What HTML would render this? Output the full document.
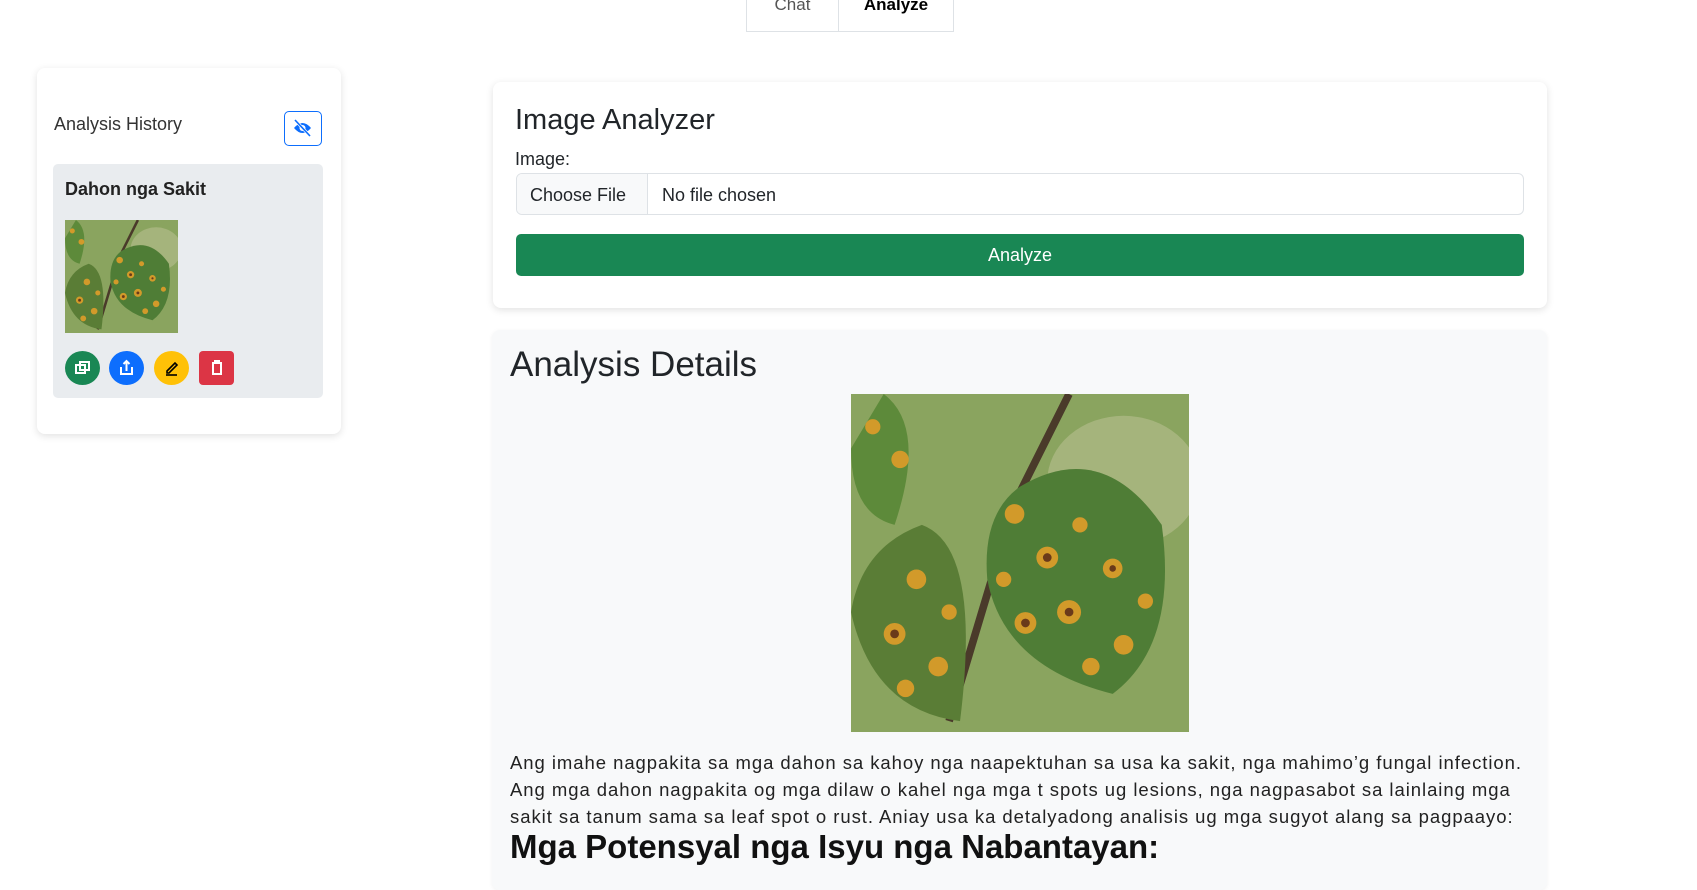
<!DOCTYPE html>
<html><head><meta charset="utf-8"><style>
*{box-sizing:border-box;margin:0;padding:0}
body{width:1697px;height:875px;overflow:hidden;background:#fff;font-family:"Liberation Sans",sans-serif;color:#212529;position:relative}
.abs{position:absolute}
.tab{position:absolute;top:-10px;height:42px;border:1px solid #dee2e6;border-top:none;font-size:17px;text-align:center;line-height:30px}
.card{position:absolute;background:#fff;border-radius:8px;box-shadow:0 2px 8px rgba(0,0,0,.12)}
.btn{position:absolute;width:35px;height:34px;border-radius:50%;top:351px}
</style></head><body>
<div class="tab" style="left:746px;width:92px;color:#555;border-right:none">Chat</div>
<div class="tab" style="left:838px;width:116px;font-weight:bold;color:#000">Analyze</div>

<div class="card" style="left:37px;top:68px;width:304px;height:366px"></div>
<div class="abs" style="left:54px;top:114px;font-size:18px;color:#333">Analysis History</div>
<div class="abs" style="left:284px;top:111px;width:38px;height:35px;border:1.5px solid #0d6efd;border-radius:5px">
<svg width="35" height="32" viewBox="0 0 35 32"><path d="M9 16 Q17.5 6 26 16 Q17.5 26 9 16Z" fill="#0d6efd"/><circle cx="17.5" cy="16" r="3" fill="#fff"/><line x1="10" y1="8" x2="25" y2="24" stroke="#fff" stroke-width="3"/><line x1="10" y1="8" x2="25" y2="24" stroke="#0d6efd" stroke-width="1.6"/></svg></div>
<div class="abs" style="left:53px;top:164px;width:270px;height:234px;background:#e9ecef;border-radius:5px"></div>
<div class="abs" style="left:65px;top:179px;font-size:18px;font-weight:bold;color:#222">Dahon nga Sakit</div>
<svg class="abs" style="left:65px;top:220px" width="113" height="113" viewBox="0 0 310 310" preserveAspectRatio="none"><use href="#leaf"/></svg>
<div class="btn" style="left:65px;background:#198754"><svg width="35" height="34"><rect x="11" y="14" width="9" height="8" fill="none" stroke="#fff" stroke-width="2"/><rect x="15" y="11" width="9" height="8" fill="none" stroke="#fff" stroke-width="2"/></svg></div>
<div class="btn" style="left:109px;background:#0d6efd"><svg width="35" height="34"><path d="M12 16v7h11v-7M17.5 20v-10M14.5 13l3-3 3 3" fill="none" stroke="#fff" stroke-width="2"/></svg></div>
<div class="btn" style="left:154px;background:#ffc107"><svg width="35" height="34"><path d="M13 20l8-8 2 2-8 8h-2z" fill="none" stroke="#000" stroke-width="1.6"/><line x1="12" y1="24" x2="23" y2="24" stroke="#000" stroke-width="1.6"/></svg></div>
<div class="btn" style="left:199px;background:#dc3545;border-radius:4px"><svg width="36" height="34"><path d="M13 12h10M16 12v-2h4v2M14 13v10h8v-10" fill="none" stroke="#fff" stroke-width="2"/></svg></div>

<div class="card" style="left:493px;top:82px;width:1054px;height:226px"></div>
<div class="abs" style="left:515px;top:104px;font-size:29px">Image Analyzer</div>
<div class="abs" style="left:515px;top:149px;font-size:18px">Image:</div>
<div class="abs" style="left:516px;top:173px;width:1008px;height:42px;border:1px solid #dee2e6;border-radius:6px;overflow:hidden;font-size:18px">
<div class="abs" style="left:0;top:0;width:131px;height:42px;background:#f8f9fa;border-right:1px solid #dee2e6;padding:11px 0 0 13px">Choose File</div>
<div class="abs" style="left:145px;top:11px">No file chosen</div></div>
<div class="abs" style="left:516px;top:234px;width:1008px;height:42px;background:#198754;border-radius:5px;color:#fff;font-size:18px;text-align:center;line-height:42px">Analyze</div>

<div class="abs" style="left:492px;top:330px;width:1055px;height:560px;background:#f8f9fa;border-radius:8px;box-shadow:0 1px 4px rgba(0,0,0,.06)"></div>
<div class="abs" style="left:510px;top:345px;font-size:35px">Analysis Details</div>
<svg class="abs" style="left:851px;top:394px" width="338" height="338" viewBox="0 0 310 310">
<defs><g id="leaf">
<rect width="310" height="310" fill="#7a9a52"/>
<rect width="310" height="310" fill="#a8b878" opacity=".35"/>
<ellipse cx="250" cy="80" rx="70" ry="60" fill="#b8c090" opacity=".6"/>
<path d="M200 0 L150 100 L90 300" stroke="#4a3a2a" stroke-width="7" fill="none"/>
<path d="M30 0 Q70 30 40 120 Q0 110 0 50 Z" fill="#5d8a3a"/>
<path d="M155 85 Q230 40 285 120 Q300 230 240 275 Q140 250 125 170 Q120 110 155 85Z" fill="#4f7d36"/>
<path d="M65 120 Q120 140 100 300 Q20 290 0 200 Q10 140 65 120Z" fill="#5a7d36"/>
<g fill="#d29a2a"><circle cx="150" cy="110" r="9"/><circle cx="180" cy="150" r="10"/><circle cx="210" cy="120" r="7"/><circle cx="240" cy="160" r="9"/><circle cx="200" cy="200" r="11"/><circle cx="160" cy="210" r="10"/><circle cx="250" cy="230" r="9"/><circle cx="220" cy="250" r="8"/><circle cx="270" cy="190" r="7"/><circle cx="60" cy="170" r="9"/><circle cx="40" cy="220" r="10"/><circle cx="80" cy="250" r="9"/><circle cx="50" cy="270" r="8"/><circle cx="90" cy="200" r="7"/><circle cx="20" cy="30" r="7"/><circle cx="45" cy="60" r="8"/><circle cx="140" cy="170" r="7"/></g>
<g fill="#6a3a1a"><circle cx="180" cy="150" r="4"/><circle cx="200" cy="200" r="4"/><circle cx="40" cy="220" r="4"/><circle cx="240" cy="160" r="3"/><circle cx="160" cy="210" r="4"/></g>
</g></defs><use href="#leaf"/></svg>
<div class="abs" style="left:510px;top:749px;width:1030px;font-size:18.5px;letter-spacing:0.95px;line-height:27px;color:#222">Ang imahe nagpakita sa mga dahon sa kahoy nga naapektuhan sa usa ka sakit, nga mahimo’g fungal infection.<br>Ang mga dahon nagpakita og mga dilaw o kahel nga mga t spots ug lesions, nga nagpasabot sa lainlaing mga<br>sakit sa tanum sama sa leaf spot o rust. Aniay usa ka detalyadong analisis ug mga sugyot alang sa pagpaayo:</div>
<div class="abs" style="left:510px;top:828px;font-size:33px;font-weight:bold;color:#111">Mga Potensyal nga Isyu nga Nabantayan:</div>
</body></html>
